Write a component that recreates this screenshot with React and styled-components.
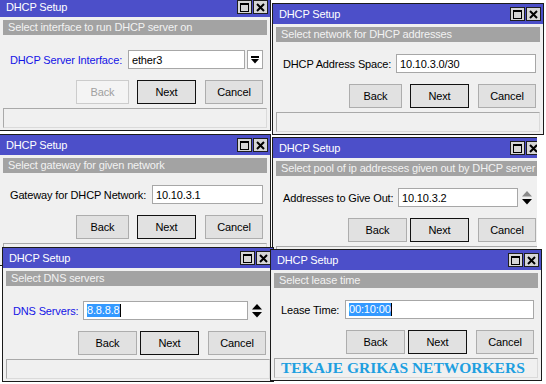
import React from 'react';
import styled, { createGlobalStyle } from 'styled-components';

const Global = createGlobalStyle`
  html, body { margin: 0; padding: 0; background: #ffffff; }
  body { font-family: "Liberation Sans", Arial, sans-serif; }
  #root { width: 546px; height: 384px; }
`;

const Desktop = styled.div`
  position: relative;
  width: 546px;
  height: 384px;
  overflow: hidden;
  background: #ffffff;
`;

const Slot = styled.div`
  position: absolute;
  left: ${(p) => p.$x}px;
  top: ${(p) => p.$y}px;
  width: ${(p) => p.$clip}px;
  overflow: hidden;
`;

const Frame = styled.div`
  width: 272px;
  box-sizing: border-box;
  border: 1px solid #1b1b1b;
  background: #f0f0f0;
  display: flex;
  flex-direction: column;
  font-size: 11px;
  letter-spacing: -0.15px;
  color: #000;
`;

const TitleBar = styled.div`
  height: 20px;
  background: #4c4fc9;
  display: flex;
  align-items: center;
  padding: 0 2px 0 6px;
  color: #ffffff;
`;

const TitleText = styled.span`
  flex: 1;
`;

const TitleButtons = styled.div`
  display: flex;
  gap: 1px;
`;

const TitleBtn = styled.div`
  width: 15px;
  height: 14px;
  box-sizing: border-box;
  border: 1px solid #1e1e1e;
  background: #d6d6d6;
  display: flex;
  align-items: center;
  justify-content: center;
`;

const Body = styled.div`
  display: flex;
  flex-direction: column;
  padding: 0 3px 2px 3px;
`;

const SubHeader = styled.div`
  margin-top: 3px;
  height: 15px;
  line-height: 15px;
  background: #a3a3a3;
  color: #f2f2f2;
  padding-left: 5px;
  white-space: nowrap;
  overflow: hidden;
`;

const FieldRow = styled.div`
  margin-top: ${(p) => (p.$tall ? 15 : 12)}px;
  height: 19px;
  display: flex;
  align-items: center;
  padding: 0 4px 0 7px;
`;

const Label = styled.span`
  width: ${(p) => p.$w}px;
  flex: none;
  color: ${(p) => (p.$active ? '#1414e6' : '#000000')};
  white-space: nowrap;
`;

const InputBox = styled.div`
  flex: 1;
  height: 19px;
  box-sizing: border-box;
  border: 1px solid #a7a7a7;
  background: #ffffff;
  padding-left: 3px;
  display: flex;
  align-items: center;
  white-space: nowrap;
  overflow: hidden;
`;

const Selected = styled.span`
  background: #3399ff;
  color: #ffffff;
  line-height: 13px;
  border-right: 1px solid #000;
`;

const DropBtn = styled.div`
  width: 16px;
  height: 19px;
  margin-left: 2px;
  box-sizing: border-box;
  border: 1px solid #a7a7a7;
  background: #ffffff;
  display: flex;
  align-items: center;
  justify-content: center;
`;

const SpinBox = styled.div`
  width: 18px;
  height: 19px;
  display: flex;
  align-items: center;
  justify-content: center;
`;

const ButtonRow = styled.div`
  margin-top: 11px;
  height: 24px;
  display: flex;
  justify-content: flex-end;
  padding-right: 4px;
`;

const Btn = styled.div`
  width: ${(p) => p.$w}px;
  margin-left: ${(p) => p.$gap}px;
  height: 24px;
  box-sizing: border-box;
  border: 1px solid ${(p) => (p.$default ? '#111111' : p.$disabled ? '#cccccc' : '#adadad')};
  background: ${(p) => (p.$disabled ? '#f4f4f4' : '#e1e1e1')};
  color: ${(p) => (p.$disabled ? '#a0a0a0' : '#000000')};
  display: flex;
  align-items: center;
  justify-content: center;
`;

const StatusBar = styled.div`
  margin-top: 4px;
  height: 20px;
  box-sizing: border-box;
  border-top: 1px solid #a9a9a9;
  border-left: 1px solid #a9a9a9;
  border-right: 1px solid #dadada;
  border-bottom: 1px solid #dadada;
  background: #f0f0f0;
  display: flex;
  align-items: center;
  padding-left: 6px;
`;

const Brand = styled.span`
  font-family: "Liberation Serif", "Times New Roman", serif;
  font-weight: bold;
  font-size: 15.5px;
  letter-spacing: 0;
  color: #1e9fe0;
  white-space: nowrap;
`;

const MaxIcon = () => (
  <svg width="9" height="9" viewBox="0 0 9 9">
    <rect x="0.5" y="0.5" width="8" height="8" fill="none" stroke="#000" />
    <rect x="0" y="0" width="9" height="2" fill="#000" />
  </svg>
);

const CloseIcon = () => (
  <svg width="9" height="9" viewBox="0 0 9 9">
    <path d="M1 1 L8 8 M8 1 L1 8" stroke="#000" strokeWidth="2" />
  </svg>
);

const DropIcon = () => (
  <svg width="8" height="8" viewBox="0 0 8 8">
    <rect x="0" y="0" width="8" height="2" fill="#000" />
    <path d="M0 3 L8 3 L4 7.5 Z" fill="#000" />
  </svg>
);

const SpinIcon = ({ top }) => (
  <svg width="10" height="14" viewBox="0 0 10 14">
    <path d="M5 0 L10 5.5 L0 5.5 Z" fill={top} />
    <path d="M0 8 L10 8 L5 13.5 Z" fill="#000" />
  </svg>
);

const windows = [
  {
    x: -1, y: -4, clip: 273, tall: true,
    sub: 'Select interface to run DHCP server on',
    label: 'DHCP Server Interface:', labelW: 118, active: true,
    value: 'ether3', addon: 'drop', backDisabled: true, backW: 53, backGap: 8,
  },
  {
    x: 272, y: 3, clip: 272,
    sub: 'Select network for DHCP addresses',
    label: 'DHCP Address Space:', labelW: 113,
    value: '10.10.3.0/30', backW: 53, backGap: 8,
  },
  {
    x: -1, y: 134, clip: 273,
    sub: 'Select gateway for given network',
    label: 'Gateway for DHCP Network:', labelW: 142,
    value: '10.10.3.1', backW: 53, backGap: 8,
  },
  {
    x: 272, y: 137, clip: 265,
    sub: 'Select pool of ip addresses given out by DHCP server',
    label: 'Addresses to Give Out:', labelW: 115,
    value: '10.10.3.2', addon: 'spinGray', backW: 59, backGap: 3,
  },
  {
    x: 2, y: 247, clip: 272, tall: true,
    sub: 'Select DNS servers',
    label: 'DNS Servers:', labelW: 70, active: true,
    value: '8.8.8.8', selected: true, addon: 'spin', backW: 59, backGap: 3,
  },
  {
    x: 270, y: 249, clip: 272,
    sub: 'Select lease time',
    label: 'Lease Time:', labelW: 64,
    value: '00:10:00', selected: true, backW: 59, backGap: 3,
    brand: 'TEKAJE GRIKAS NETWORKERS',
  },
];

const SetupWindow = ({ w }) => (
  <Slot $x={w.x} $y={w.y} $clip={w.clip}>
    <Frame>
      <TitleBar>
        <TitleText>DHCP Setup</TitleText>
        <TitleButtons>
          <TitleBtn><MaxIcon /></TitleBtn>
          <TitleBtn><CloseIcon /></TitleBtn>
        </TitleButtons>
      </TitleBar>
      <Body>
        <SubHeader>{w.sub}</SubHeader>
        <FieldRow $tall={w.tall}>
          <Label $w={w.labelW} $active={w.active}>{w.label}</Label>
          <InputBox>
            {w.selected ? <Selected>{w.value}</Selected> : w.value}
          </InputBox>
          {w.addon === 'drop' && <DropBtn><DropIcon /></DropBtn>}
          {w.addon === 'spin' && <SpinBox><SpinIcon top="#000" /></SpinBox>}
          {w.addon === 'spinGray' && <SpinBox><SpinIcon top="#8a8a8a" /></SpinBox>}
        </FieldRow>
        <ButtonRow>
          <Btn $w={w.backW} $gap={0} $disabled={w.backDisabled}>Back</Btn>
          <Btn $w={59} $gap={w.backGap} $default>Next</Btn>
          <Btn $w={58} $gap={9}>Cancel</Btn>
        </ButtonRow>
        <StatusBar>{w.brand && <Brand>{w.brand}</Brand>}</StatusBar>
      </Body>
    </Frame>
  </Slot>
);

export default function App() {
  return (
    <>
      <Global />
      <Desktop>
        {windows.map((w, i) => (
          <SetupWindow key={i} w={w} />
        ))}
      </Desktop>
    </>
  );
}
